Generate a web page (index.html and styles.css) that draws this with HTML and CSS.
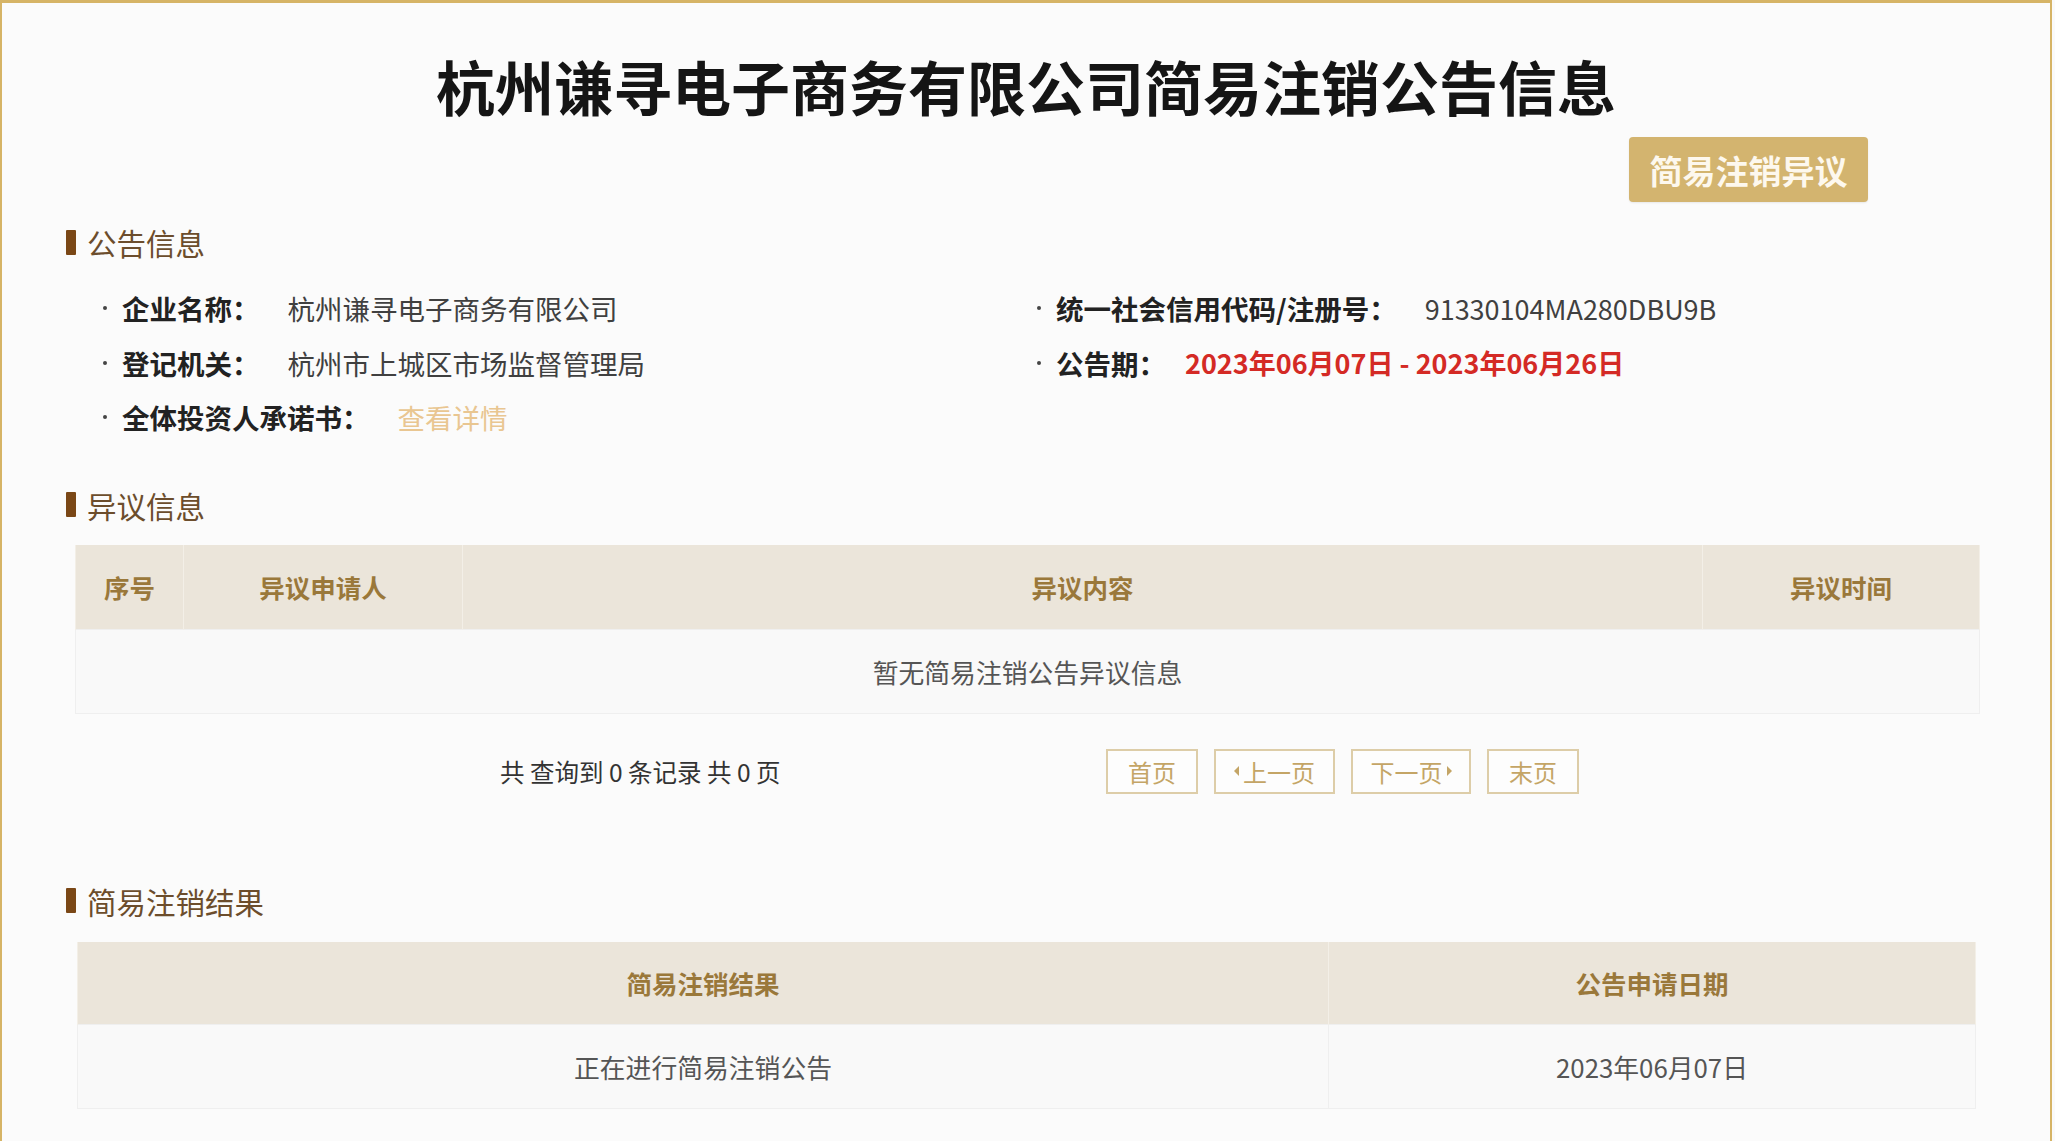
FILE: index.html
```html
<!DOCTYPE html>
<html lang="zh-CN">
<head>
<meta charset="utf-8">
<title>杭州谦寻电子商务有限公司简易注销公告信息</title>
<link rel="stylesheet" href="styles.css">
</head>
<body>
<div class="page">
  <h1 class="title">杭州谦寻电子商务有限公司简易注销公告信息</h1>
  <div class="btn-row"><a class="objection-btn">简易注销异议</a></div>

  <h2 class="sec-head sec-1"><span class="bar"></span>公告信息</h2>
  <div class="info">
    <div class="item"><span class="dot"></span><span class="label">企业名称：</span><span class="value">杭州谦寻电子商务有限公司</span></div>
    <div class="item"><span class="dot"></span><span class="label">统一社会信用代码/注册号：</span><span class="value code">91330104MA280DBU9B</span></div>
    <div class="item"><span class="dot"></span><span class="label">登记机关：</span><span class="value">杭州市上城区市场监督管理局</span></div>
    <div class="item"><span class="dot"></span><span class="label tight">公告期：</span><span class="value red">2023年06月07日 - 2023年06月26日</span></div>
    <div class="item"><span class="dot"></span><span class="label">全体投资人承诺书：</span><a class="value link">查看详情</a></div>
  </div>

  <h2 class="sec-head sec-2"><span class="bar"></span>异议信息</h2>
  <table class="tbl tbl-1">
    <colgroup><col style="width:108px"><col style="width:279px"><col style="width:1240px"><col style="width:277px"></colgroup>
    <thead><tr><th>序号</th><th>异议申请人</th><th>异议内容</th><th>异议时间</th></tr></thead>
    <tbody><tr><td colspan="4">暂无简易注销公告异议信息</td></tr></tbody>
  </table>

  <div class="pager">
    <span class="pager-text">共 查询到 0 条记录 共 0 页</span>
    <div class="pager-btns">
      <a class="pbtn">首页</a>
      <a class="pbtn"><span class="tri tri-l"></span>上一页</a>
      <a class="pbtn">下一页<span class="tri tri-r"></span></a>
      <a class="pbtn">末页</a>
    </div>
  </div>

  <h2 class="sec-head sec-3"><span class="bar"></span>简易注销结果</h2>
  <table class="tbl tbl-2">
    <colgroup><col style="width:1251px"><col style="width:647px"></colgroup>
    <thead><tr><th>简易注销结果</th><th>公告申请日期</th></tr></thead>
    <tbody><tr><td>正在进行简易注销公告</td><td>2023年06月07日</td></tr></tbody>
  </table>
</div>
</body>
</html>
```

FILE: styles.css
```css
html, body {
  margin: 0;
  padding: 0;
  background: #fafafa;
  overflow: hidden;
}
body {
  font-family: "Noto Sans CJK SC", "Noto Sans", "Liberation Sans", sans-serif;
  color: #333;
}
.page {
  width: 2052px;
  height: 1141px;
  box-sizing: border-box;
  border: 2px solid #d6b466;
  border-top-width: 3px;
  border-bottom: 0;
  background: #fbfbfb;
}
.title {
  margin: 45px 0 0;
  text-align: center;
  font-size: 59px;
  line-height: 76px;
  font-weight: 700;
  color: #151515;
}
.btn-row {
  display: flex;
  justify-content: flex-end;
  padding-right: 182px;
  margin-top: 13px;
}
.objection-btn {
  display: flex;
  align-items: center;
  justify-content: center;
  width: 239px;
  height: 65px;
  background: #d3b46f;
  color: #fdf8ee;
  font-size: 33px;
  font-weight: 700;
  border-radius: 4px;
  box-shadow: 0 1px 2px rgba(0,0,0,0.08);
}
.sec-head {
  display: flex;
  align-items: center;
  margin: 0;
  padding-left: 64px;
  height: 40px;
  font-size: 29.5px;
  font-weight: 400;
  color: #6c4d2c;
}
.sec-head .bar {
  display: inline-block;
  width: 10px;
  height: 25px;
  background: #7a4716;
  margin-right: 11px;
  border-radius: 1px;
}
.sec-1 { margin-top: 20px; }
.sec-2 { margin-top: 40px; }
.sec-3 { margin-top: 87px; }

.info {
  display: grid;
  grid-template-columns: 934px 1fr;
  margin: 19px 0 0 101px;
}
.item {
  display: flex;
  align-items: center;
  height: 54.5px;
  font-size: 27.5px;
  white-space: nowrap;
}
.dot {
  display: inline-block;
  width: 4px;
  height: 4px;
  border-radius: 50%;
  background: #444;
  margin-right: 15px;
}
.label {
  font-weight: 700;
  color: #222;
  margin-right: 28px;
}
.label.tight { margin-right: 19px; }
.value { color: #404040; }
.value.code { font-size: 27px; }
.value.red { color: #d42a25; font-weight: 700; font-size: 27px; }
.value.link { color: #e9c691; }

.tbl {
  border-collapse: collapse;
  table-layout: fixed;
  margin-top: 20px;
}
.tbl-1 { width: 1904px; margin-left: 73px; }
.tbl-2 { width: 1898px; margin-left: 75px; margin-top: 21px; }
.tbl th {
  background: #ebe5da;
  color: #9a783a;
  font-size: 25.5px;
  font-weight: 700;
  height: 84px;
  padding: 0;
  text-align: center;
  border-left: 1px solid #f3efe7;
  border-right: 1px solid #f3efe7;
}
.tbl-2 th { height: 82px; }
.tbl td {
  background: #f9f9f9;
  color: #555;
  font-size: 25.8px;
  height: 83px;
  padding: 0;
  text-align: center;
  border: 1px solid #efefef;
}

.pager {
  display: flex;
  align-items: center;
  margin: 35px 0 0 498px;
  height: 45px;
}
.pager-text {
  width: 606px;
  font-size: 24.5px;
  color: #333;
  white-space: pre;
}
.pager-btns {
  display: flex;
  gap: 16px;
}
.pbtn {
  display: flex;
  align-items: center;
  justify-content: center;
  height: 45px;
  box-sizing: border-box;
  border: 2px solid #ddcda8;
  color: #c4a566;
  font-size: 24px;
  background: #fdfdfd;
}
.pbtn:nth-child(1), .pbtn:nth-child(4) { width: 92px; }
.pbtn:nth-child(2) { width: 121px; }
.pbtn:nth-child(3) { width: 120px; }
.tri {
  display: inline-block;
  width: 0;
  height: 0;
  border-top: 5px solid transparent;
  border-bottom: 5px solid transparent;
}
.tri-l { border-right: 5px solid #c4a566; margin-right: 4px; }
.tri-r { border-left: 5px solid #c4a566; margin-left: 4px; }
```
